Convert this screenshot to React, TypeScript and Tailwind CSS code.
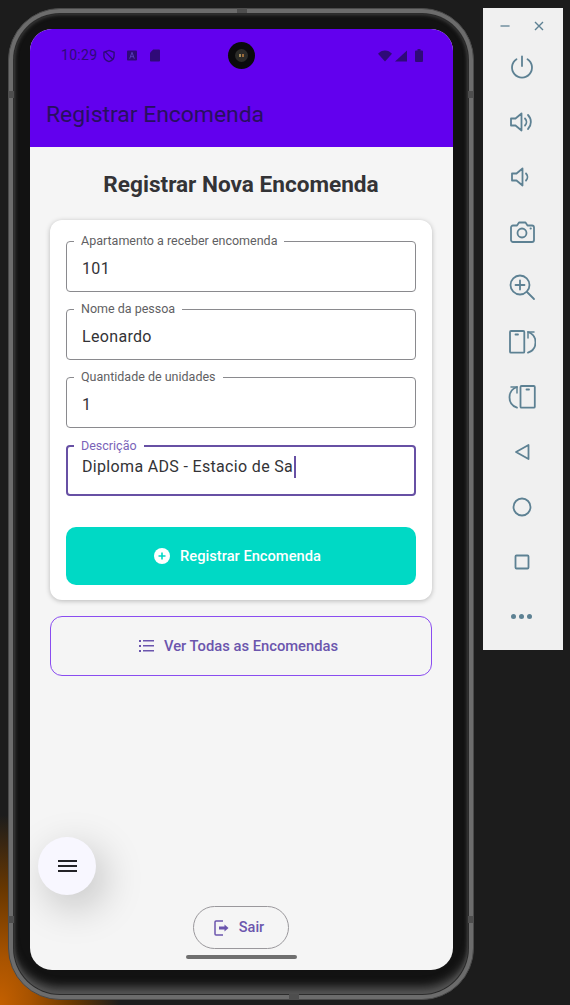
import type { ReactNode } from 'react';

const ink = 'text-[#5d8193]';

function Field({ label, value, focused }: { label: string; value: string; focused?: boolean }) {
  return (
    <div
      className={`relative h-[51px] rounded-[4px] border bg-white ${
        focused ? 'border-2 border-[#6750a4]' : 'border-[#8a8a8e]'
      }`}
    >
      <span
        className={`absolute top-[-8px] bg-white px-[7px] text-[12.5px] leading-[14px] ${
          focused ? 'left-[6px] text-[#7a63b8]' : 'left-[7px] text-[#5f5f63]'
        }`}
      >
        {label}
      </span>
      <div
        className={`flex h-full items-center text-[16px] tracking-[0.33px] text-[#333336] ${
          focused ? 'pb-[7px] pl-[14px]' : 'pl-[15px] pt-[5px]'
        }`}
      >
        {value}
        {focused && <span className="ml-[1px] h-[22px] w-[2px] bg-[#6750a4]" />}
      </div>
    </div>
  );
}

function ToolIcon({ children }: { children: ReactNode }) {
  return (
    <div className={`flex h-[55px] w-full items-center justify-center ${ink}`}>
      <svg
        width="28"
        height="28"
        viewBox="0 0 28 28"
        fill="none"
        stroke="currentColor"
        strokeWidth="1.8"
        strokeLinecap="round"
        strokeLinejoin="round"
      >
        {children}
      </svg>
    </div>
  );
}

function StatusBar() {
  return (
    <div className="relative flex h-[52px] items-center pl-[31px] pr-[30px] pt-[1px] text-[#2f0a78]">
      <span className="text-[14px] tracking-[0.3px]">10:29</span>
      <svg className="ml-[6px]" width="12" height="14" viewBox="0 0 13 14" fill="none" stroke="currentColor" strokeWidth="1.5">
        <path d="M6.5 1 12 3v4c0 3-2.3 5-5.500 6C3.300 12 1 10 1 7V3z" />
        <path d="M2 2l9 9" />
      </svg>
      <svg className="ml-[12px]" width="10" height="11" viewBox="0 0 11 11">
        <rect width="11" height="11" rx="1" fill="currentColor" />
        <path d="M3 9 5.500 2 8 9M4 6.800h3" stroke="#5a3fc0" strokeWidth="1" fill="none" />
      </svg>
      <svg className="ml-[13px]" width="10" height="13" viewBox="0 0 11 13">
        <path d="M3.500 0H10a1 1 0 0 1 1 1v11a1 1 0 0 1-1 1H1a1 1 0 0 1-1-1V3.500z" fill="currentColor" />
      </svg>
      {/* camera hole */}
      <div className="absolute left-[198px] top-[13px] flex h-[27px] w-[27px] items-center justify-center rounded-full bg-[#0a0a0c]">
        <div className="flex h-[13px] w-[13px] items-center justify-center gap-[1px] rounded-full bg-[#2b2b28]">
          <span className="h-[3px] w-[2px] bg-[#a08a5a]" />
          <span className="h-[3px] w-[2px] bg-[#9a6a3a]" />
        </div>
      </div>
      <div className="ml-auto flex items-center">
        <svg width="14" height="12" viewBox="0 0 15 12" fill="currentColor">
          <path d="M0 3.500C2 1.300 4.500 0 7.500 0S13 1.300 15 3.500L7.500 12z" />
        </svg>
        <svg className="ml-[3px]" width="12" height="12" viewBox="0 0 13 12" fill="currentColor">
          <path d="M13 0v12H0z" />
        </svg>
        <svg className="ml-[8px]" width="8" height="13" viewBox="0 0 8 13" fill="currentColor">
          <path d="M2.500 0h3v1.500H7a1 1 0 0 1 1 1V12a1 1 0 0 1-1 1H1a1 1 0 0 1-1-1V2.500a1 1 0 0 1 1-1h1.500z" />
        </svg>
      </div>
    </div>
  );
}

function Screen() {
  return (
    <div className="relative flex h-[941px] w-[423px] flex-col overflow-hidden rounded-[22px] bg-[#f5f5f5] font-['Roboto',sans-serif]">
      <header className="h-[118px] bg-[#6200ee]">
        <StatusBar />
        <h2 className="pl-[16px] pt-[17px] text-[22.9px] leading-[34px] text-[#28105f]">
          Registrar Encomenda
        </h2>
      </header>

      <main className="flex flex-1 flex-col pl-[20px] pr-[21px]">
        <h1 className="pt-[23px] text-center text-[22.6px] font-bold leading-[30px] text-[#333336]">
          Registrar Nova Encomenda
        </h1>

        <section className="mt-[20px] flex h-[380px] flex-col rounded-[12px] bg-white px-[16px] pt-[21px] shadow-[0_1px_5px_rgba(0,0,0,0.25)]">
          <div className="flex flex-col gap-[17px]">
            <Field label="Apartamento a receber encomenda" value="101" />
            <Field label="Nome da pessoa" value="Leonardo" />
            <Field label="Quantidade de unidades" value="1" />
            <Field label="Descrição" value="Diploma ADS - Estacio de Sa" focused />
          </div>
          <button className="mt-[31px] flex h-[58px] items-center justify-center gap-[10px] rounded-[10px] bg-[#00d9c5] pr-[7px] text-[14.7px] font-medium text-white">
            <svg width="16" height="16" viewBox="0 0 16 16">
              <circle cx="8" cy="8" r="8" fill="#fff" />
              <path d="M8 4.500v7M4.500 8h7" stroke="#00d9c5" strokeWidth="1.600" />
            </svg>
            Registrar Encomenda
          </button>
        </section>

        <button className="mt-[16px] flex h-[60px] items-center justify-center gap-[10px] rounded-[12px] border border-[#8a4cf0] pr-[5px] text-[14.75px] font-medium text-[#6b55ad]">
          <svg width="15" height="12" viewBox="0 0 15 12" fill="currentColor">
            <rect x="0" y="0" width="2" height="2" />
            <rect x="0" y="5" width="2" height="2" />
            <rect x="0" y="10" width="2" height="2" />
            <rect x="4" y="0" width="11" height="1.500" />
            <rect x="4" y="5" width="11" height="1.500" />
            <rect x="4" y="10" width="11" height="1.500" />
          </svg>
          Ver Todas as Encomendas
        </button>

        <button className="mx-auto mt-[230px] flex h-[43px] w-[96px] items-center justify-center gap-[10px] rounded-full border border-[#9a989c] pr-[4px] text-[14.5px] font-medium text-[#6b55ad]">
          <svg width="15" height="16" viewBox="0 0 15 16" fill="none" stroke="currentColor" strokeWidth="1.500">
            <path d="M9 1H2a1 1 0 0 0-1 1v12a1 1 0 0 0 1 1h7" />
            <path d="M5 8h6" strokeWidth="3" />
            <path d="M10.500 4.500 14.500 8l-4 3.500z" fill="currentColor" stroke="none" />
          </svg>
          Sair
        </button>
      </main>

      {/* menu fab */}
      <button className="absolute left-[8px] top-[808px] flex h-[58px] w-[58px] flex-col items-center justify-center gap-[3px] rounded-full bg-[#f8f7ff] shadow-[8px_12px_40px_rgba(0,0,0,0.22)]">
        <span className="h-[2px] w-[19px] bg-[#232327]" />
        <span className="h-[2px] w-[19px] bg-[#232327]" />
        <span className="h-[2px] w-[19px] bg-[#232327]" />
      </button>

      <div className="absolute bottom-[11px] left-[156px] h-[4px] w-[111px] rounded-full bg-[#6f6f6f]" />
    </div>
  );
}

function Toolbar() {
  return (
    <aside className="ml-[9px] flex h-[642px] w-[80px] flex-col items-center bg-[#f0f0f0] pr-[3px]">
      <div className={`flex h-[31px] items-center gap-[24px] pt-[4px] ${ink}`}>
        <svg width="10" height="10" viewBox="0 0 10 10" stroke="currentColor" strokeWidth="1.300">
          <path d="M0.500 5h9" />
        </svg>
        <svg width="10" height="10" viewBox="0 0 10 10" stroke="currentColor" strokeWidth="1.400">
          <path d="M1 1l8 8M9 1 1 9" />
        </svg>
      </div>
      <ToolIcon>
        <path d="M14 3.500v9.500" />
        <path d="M8.500 6.200a10 10 0 1 0 11 0" />
      </ToolIcon>
      <ToolIcon>
        <path d="M3 10.500v7h4.500l6 5V5.500l-6 5z" />
        <path d="M17 10.500a5 5 0 0 1 0 7" />
        <path d="M20 7a10 10 0 0 1 0 14" />
      </ToolIcon>
      <ToolIcon>
        <path d="M4 10.500v7h4.500l6 5V5.500l-6 5z" />
        <path d="M18 10.500a5 5 0 0 1 0 7" />
      </ToolIcon>
      <ToolIcon>
        <path d="M3 9.500a2 2 0 0 1 2-2h4l2-3h6.500l2 3H24a2 2 0 0 1 2 2V22a2 2 0 0 1-2 2H5a2 2 0 0 1-2-2z" />
        <circle cx="14" cy="15" r="4.500" />
        <path d="M22.500 10.500h.4" />
      </ToolIcon>
      <ToolIcon>
        <circle cx="12" cy="12" r="9.500" />
        <path d="M12 7.500v9M7.500 12h9M19 19l7 7" />
      </ToolIcon>
      <ToolIcon>
        <rect x="2" y="3" width="14.300" height="21.700" rx="1" />
        <path d="M7.500 6.500h2.500" />
        <path d="M20 4c4.500 1.500 7.500 5.500 7.500 10.200 0 5-3 9-7.500 10.500" />
        <path d="M20 10V4h6" strokeWidth="1.500" />
      </ToolIcon>
      <ToolIcon>
        <rect x="12.500" y="3" width="14.300" height="21.700" rx="1" />
        <path d="M18.500 6.500H21" />
        <path d="M9 4C4.500 5.500 1.500 9.500 1.500 14.200c0 5 3 9 7.500 10.500" />
        <path d="M9 10V4H3" strokeWidth="1.500" />
      </ToolIcon>
      <ToolIcon>
        <path d="M8 14 20.500 7v14z" />
      </ToolIcon>
      <ToolIcon>
        <circle cx="14" cy="14" r="8.500" />
      </ToolIcon>
      <ToolIcon>
        <rect x="7.500" y="7.500" width="13" height="13" rx="1" />
      </ToolIcon>
      <div className={`flex h-[55px] items-center gap-[3px] ${ink}`}>
        <span className="h-[5px] w-[5px] rounded-full bg-current" />
        <span className="h-[5px] w-[5px] rounded-full bg-current" />
        <span className="h-[5px] w-[5px] rounded-full bg-current" />
      </div>
    </aside>
  );
}

export default function App() {
  return (
    <div className="relative h-[1005px] w-[570px] overflow-hidden bg-[#1c1c1c]">
      {/* wallpaper glow behind the emulator */}
      <div className="absolute bottom-0 left-0 h-[190px] w-[120px] bg-[radial-gradient(ellipse_farthest-side_at_bottom_left,#c46000_0%,#a85300_25%,#6a3800_60%,#1c1c1c_100%)]" />
      <div className="relative flex items-start pl-[8px] pt-[8px]">
        <div className="relative rounded-[52px] border border-[#4a4a4a] bg-[#6c6c6c] p-[5px]">
          <div className="rounded-[46px] bg-[#121212] pb-[24px] pl-[16px] pr-[15px] pt-[15px] shadow-[0_0_0_1px_#2c2c2c,inset_0_-12px_10px_-5px_#555555,inset_0_0_4px_#555555]">
            <Screen />
          </div>
          {/* side and top seams of the device */}
          <span className="absolute left-[228px] top-[-1px] h-[5px] w-[10px] bg-[#4e4e4e]" />
          <span className="absolute left-[-1px] top-[82px] h-[7px] w-[6px] bg-[#4e4e4e]" />
          <span className="absolute right-[-1px] top-[82px] h-[7px] w-[6px] bg-[#4e4e4e]" />
          <span className="absolute bottom-[76px] left-[-1px] h-[7px] w-[6px] bg-[#4e4e4e]" />
          <span className="absolute bottom-[76px] right-[-1px] h-[7px] w-[6px] bg-[#4e4e4e]" />
          <span className="absolute bottom-[-1px] left-[280px] h-[6px] w-[10px] bg-[#4e4e4e]" />
        </div>
        <Toolbar />
      </div>
    </div>
  );
}
